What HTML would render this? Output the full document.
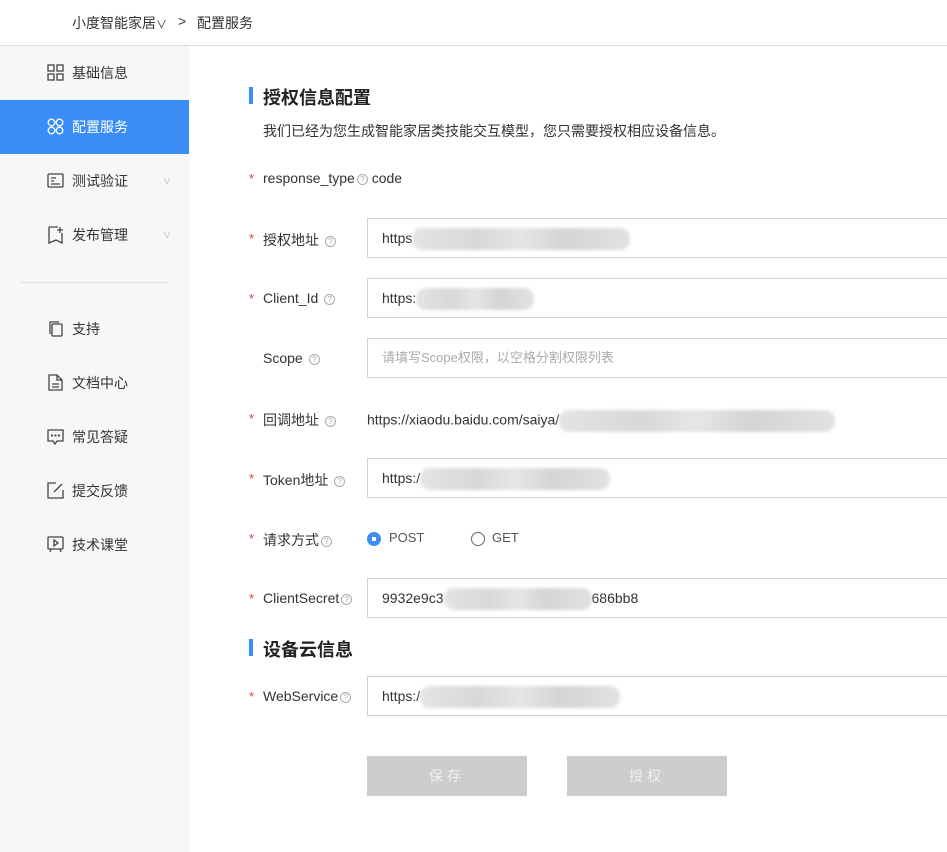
<!DOCTYPE html>
<html><head><meta charset="utf-8"><style>
*{margin:0;padding:0;box-sizing:border-box}
body{width:947px;height:852px;overflow:hidden;background:#fff;font-family:"Liberation Sans","Noto Sans CJK SC",sans-serif;color:#333;position:relative;font-size:14px}
.hdr{position:absolute;left:0;top:0;width:947px;height:46px;border-bottom:1px solid #ddd;background:#fff}
.hdr span{position:absolute;top:13px;font-size:14px;color:#333}
.side{position:absolute;left:0;top:46px;width:189px;height:806px;background:#f7f7f8}
.item{position:absolute;left:0;width:189px;height:54px;line-height:54px;font-size:14px;color:#333}
.item .t{position:absolute;left:72px}
.item svg{position:absolute;left:47px;top:18px}
.item .ch{position:absolute;left:163px;top:1px;font-size:8px;color:#aaa}
.active{background:#3a8ef5;color:#fff}
.a{position:absolute;white-space:nowrap}
.star{position:absolute;left:249px;color:#e4393c;font-size:13px}
.lab{position:absolute;left:263px;font-size:14px;color:#333}
.q{display:inline-block;width:11px;height:11px;border:1px solid #aaa;border-radius:50%;font-size:8px;line-height:9px;text-align:center;color:#aaa;vertical-align:1px;margin-left:2px}
.inp{position:absolute;left:367px;width:600px;height:40px;border:1px solid #d0d0d0;background:#fff;padding-left:14px;line-height:38px;font-size:14px;color:#333}
.blur{display:inline-block;height:22px;vertical-align:middle;background:linear-gradient(90deg,#e4e4e4,#d8d8d8 30%,#e6e6e6 50%,#d4d4d4 70%,#e2e2e2);border-radius:10px;filter:blur(1.5px)}
.btn{position:absolute;top:756px;width:160px;height:40px;background:#cdcdcd;color:#f0f0f0;text-align:center;line-height:40px;font-size:14px;letter-spacing:4px}
.h{position:absolute;left:249px;width:4px;height:17px;background:#3a8ef5}
.ht{position:absolute;left:263px;font-size:18px;font-weight:bold;color:#222}
</style></head><body>
<div class="hdr"><span style="left:72px">小度智能家居<span style="font-size:11px;position:static">∨</span></span><span style="left:178px">&gt;</span><span style="left:197px">配置服务</span></div>
<div class="side">
<div class="item" style="top:0"><svg width="17" height="17" fill="none" stroke="#444" stroke-width="1.3"><rect x="1" y="1" width="6" height="6"/><rect x="10" y="1" width="6" height="6"/><rect x="1" y="10" width="6" height="6"/><rect x="10" y="10" width="6" height="6"/></svg><span class="t">基础信息</span></div>
<div class="item active" style="top:54px"><svg width="17" height="17" fill="none" stroke="#fff" stroke-width="1.3"><circle cx="4.5" cy="4.5" r="3.3"/><circle cx="12.5" cy="4.5" r="3.3"/><circle cx="4.5" cy="12.5" r="3.3"/><circle cx="12.5" cy="12.5" r="3.3"/></svg><span class="t">配置服务</span></div>
<div class="item" style="top:108px"><svg width="17" height="17" fill="none" stroke="#444" stroke-width="1.3"><rect x="1" y="2" width="15" height="13" rx="1"/><path d="M4 6h5M4 9h3M4 12h9"/></svg><span class="t">测试验证</span><span class="ch">∨</span></div>
<div class="item" style="top:162px"><svg width="17" height="18" fill="none" stroke="#444" stroke-width="1.3"><path d="M2 1h9M15 7v10l-6-3-7 3V1"/><path d="M13 1v6M10 4h6"/></svg><span class="t">发布管理</span><span class="ch">∨</span></div>
<div style="position:absolute;left:20px;top:236px;width:148px;height:1px;background:#e2e2e2"></div>
<div class="item" style="top:256px"><svg width="17" height="17" fill="none" stroke="#444" stroke-width="1.3"><path d="M3 14V2h9"/><rect x="5" y="4" width="10" height="12" rx="1"/></svg><span class="t">支持</span></div>
<div class="item" style="top:310px"><svg width="17" height="17" fill="none" stroke="#444" stroke-width="1.3"><path d="M2 1h8l5 5v10H2z M10 1v5h5M5 10h7M5 13h7"/></svg><span class="t">文档中心</span></div>
<div class="item" style="top:364px"><svg width="17" height="17" fill="none" stroke="#444" stroke-width="1.3"><path d="M1 2h15v11H10l-2 3-2-3H1z"/><circle cx="5" cy="7.5" r=".5"/><circle cx="8.5" cy="7.5" r=".5"/><circle cx="12" cy="7.5" r=".5"/></svg><span class="t">常见答疑</span></div>
<div class="item" style="top:418px"><svg width="17" height="17" fill="none" stroke="#444" stroke-width="1.3"><path d="M9 1H1v15h15V8M7 10l8-8"/></svg><span class="t">提交反馈</span></div>
<div class="item" style="top:472px"><svg width="17" height="17" fill="none" stroke="#444" stroke-width="1.3"><rect x="1" y="1" width="15" height="12" rx="1"/><path d="M7 4l4 3-4 3z M4 13l-1 3M13 13l1 3"/></svg><span class="t">技术课堂</span></div>
</div>

<div class="h" style="top:87px"></div><div class="ht a" style="top:84px">授权信息配置</div>
<div class="a" style="left:263px;top:121px;font-size:14px;color:#333">我们已经为您生成智能家居类技能交互模型，您只需要授权相应设备信息。</div>

<span class="star a" style="top:171px">*</span><span class="lab a" style="top:170px">response_type<span class="q">?</span> code</span>

<span class="star a" style="top:231px">*</span><span class="lab a" style="top:230px">授权地址 <span class="q">?</span></span>
<div class="inp" style="top:218px">https<span class="blur" style="width:218px"></span></div>

<span class="star a" style="top:291px">*</span><span class="lab a" style="top:290px">Client_Id <span class="q">?</span></span>
<div class="inp" style="top:278px">https:<span class="blur" style="width:118px"></span></div>

<span class="lab a" style="top:350px">Scope <span class="q">?</span></span>
<div class="inp" style="top:338px;color:#aaa;font-size:13px">请填写Scope权限，以空格分割权限列表</div>

<span class="star a" style="top:411px">*</span><span class="lab a" style="top:410px">回调地址 <span class="q">?</span></span>
<div class="a" style="left:367px;top:410px">https://xiaodu.baidu.com/saiya/<span class="blur" style="width:276px"></span></div>

<span class="star a" style="top:471px">*</span><span class="lab a" style="top:470px">Token地址 <span class="q">?</span></span>
<div class="inp" style="top:458px">https:/<span class="blur" style="width:190px"></span></div>

<span class="star a" style="top:531px">*</span><span class="lab a" style="top:530px">请求方式<span class="q">?</span></span>
<div class="a" style="left:367px;top:532px;width:14px;height:14px;border-radius:50%;background:#3a8ef5"><div style="margin:5px;width:4px;height:4px;background:#fff"></div></div>
<span class="a" style="left:389px;top:530px;font-size:13px;color:#555">POST</span>
<div class="a" style="left:471px;top:532px;width:14px;height:14px;border-radius:50%;border:1px solid #666"></div>
<span class="a" style="left:492px;top:530px;font-size:13px;color:#555">GET</span>

<span class="star a" style="top:591px">*</span><span class="lab a" style="top:590px">ClientSecret<span class="q">?</span></span>
<div class="inp" style="top:578px">9932e9c3<span class="blur" style="width:148px"></span>686bb8</div>

<div class="h" style="top:639px"></div><div class="ht a" style="top:636px">设备云信息</div>

<span class="star a" style="top:689px">*</span><span class="lab a" style="top:688px">WebService<span class="q">?</span></span>
<div class="inp" style="top:676px">https:/<span class="blur" style="width:200px"></span></div>

<div class="btn" style="left:367px">保存</div>
<div class="btn" style="left:567px">授权</div>
</body></html>
